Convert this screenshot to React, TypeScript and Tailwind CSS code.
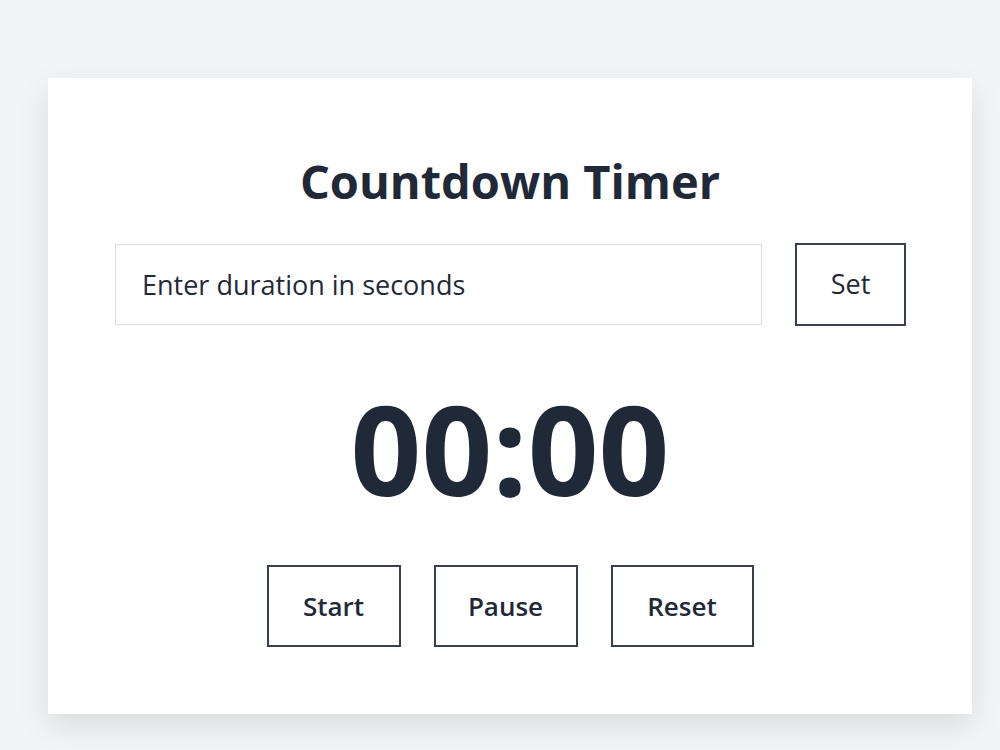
import { useEffect, useState } from "react";

const font = { fontFamily: '"Open Sans", "Noto Sans", sans-serif' };

function fmt(total: number) {
  const m = Math.floor(total / 60);
  const s = total % 60;
  return `${String(m).padStart(2, "0")}:${String(s).padStart(2, "0")}`;
}

export default function App() {
  const [input, setInput] = useState("");
  const [duration, setDuration] = useState(0);
  const [left, setLeft] = useState(0);
  const [running, setRunning] = useState(false);

  useEffect(() => {
    if (!running) return;
    const id = setInterval(() => {
      setLeft((t) => {
        if (t <= 1) {
          setRunning(false);
          return 0;
        }
        return t - 1;
      });
    }, 1000);
    return () => clearInterval(id);
  }, [running]);

  const onSet = () => {
    const n = parseInt(input, 10);
    if (Number.isNaN(n) || n < 0) return;
    setDuration(n);
    setLeft(n);
    setRunning(false);
  };

  return (
    <div className="min-h-screen bg-[#f3f4f6] pl-[48px] pt-[78px]" style={font}>
      <div className="flex h-[636px] w-[924px] flex-col items-center bg-white px-[66px] pt-[80px] shadow-[0_12px_30px_rgba(0,0,0,0.10)]">
        <h1 className="text-[47px] font-bold leading-none text-[#1f2937]">Countdown Timer</h1>

        <div className="mt-[38px] flex w-full items-center gap-[33px]">
          <input
            value={input}
            onChange={(e) => setInput(e.target.value)}
            placeholder="Enter duration in seconds"
            className="ml-px h-[81px] flex-1 border border-[#d9dde3] px-[26px] text-[27px] text-[#1f2937] outline-none placeholder:text-[#1f2937]"
          />
          <button
            onClick={onSet}
            className="h-[83px] w-[111px] border-2 border-[#374151] text-[27px] text-[#1f2937]"
          >
            Set
          </button>
        </div>

        <div className="mt-[60px] text-[124px] font-bold leading-none text-[#1f2937]">
          {fmt(left)}
        </div>

        <div className="mt-[55px] flex gap-[33px]">
          <button
            onClick={() => left > 0 && setRunning(true)}
            className="h-[82px] w-[134px] border-2 border-[#374151] text-[26px] font-semibold text-[#1f2937]"
          >
            Start
          </button>
          <button
            onClick={() => setRunning(false)}
            className="h-[82px] w-[144px] border-2 border-[#374151] text-[26px] font-semibold text-[#1f2937]"
          >
            Pause
          </button>
          <button
            onClick={() => {
              setRunning(false);
              setLeft(duration);
            }}
            className="h-[82px] w-[143px] border-2 border-[#374151] text-[26px] font-semibold text-[#1f2937]"
          >
            Reset
          </button>
        </div>
      </div>
    </div>
  );
}
